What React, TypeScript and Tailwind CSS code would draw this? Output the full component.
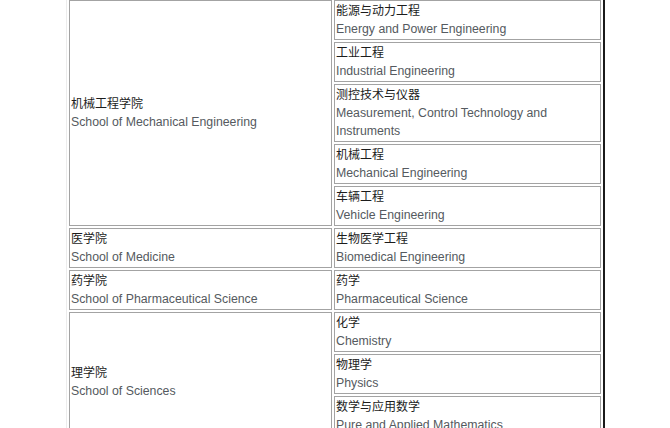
import React from 'react';

type Major = { zh: string; en: string; tall?: boolean };
type School = { zh: string; en: string; majors: Major[] };

const schools: School[] = [
  {
    zh: '机械工程学院',
    en: 'School of Mechanical Engineering',
    majors: [
      { zh: '能源与动力工程', en: 'Energy and Power Engineering' },
      { zh: '工业工程', en: 'Industrial Engineering' },
      { zh: '测控技术与仪器', en: 'Measurement, Control Technology and Instruments' },
      { zh: '机械工程', en: 'Mechanical Engineering' },
      { zh: '车辆工程', en: 'Vehicle Engineering' },
    ],
  },
  {
    zh: '医学院',
    en: 'School of Medicine',
    majors: [{ zh: '生物医学工程', en: 'Biomedical Engineering' }],
  },
  {
    zh: '药学院',
    en: 'School of Pharmaceutical Science',
    majors: [{ zh: '药学', en: 'Pharmaceutical Science' }],
  },
  {
    zh: '理学院',
    en: 'School of Sciences',
    majors: [
      { zh: '化学', en: 'Chemistry' },
      { zh: '物理学', en: 'Physics' },
      { zh: '数学与应用数学', en: 'Pure and Applied Mathematics', tall: true },
    ],
  },
];

const Label = ({ zh, en }: { zh: string; en: string }) => (
  <>
    <div className="text-[#1c1c1c] text-[12px]">{zh}</div>
    <div className="text-[#555a60]">{en}</div>
  </>
);

export default function App() {
  return (
    <div className="w-[670px] h-[428px] overflow-hidden bg-white font-['Liberation_Sans','Noto_Sans_CJK_SC',sans-serif] text-[12.3px] leading-[18px]">
      <table className="ml-[66px] -mt-[3px] w-[539px] border-separate border-spacing-[2px] border-t border-l border-t-[#ececec] border-l-[#ececec] border-r-[2px] border-r-[#1a1a1a] border-b border-b-[#1a1a1a]">
        <tbody>
          {schools.map((s) =>
            s.majors.map((m, i) => (
              <tr key={s.zh + m.zh}>
                {i === 0 && (
                  <td
                    rowSpan={s.majors.length}
                    className="w-[263px] border border-[#a3a3a3] p-[1px] align-middle text-left"
                  >
                    <Label zh={s.zh} en={s.en} />
                  </td>
                )}
                <td
                  className={
                    'border border-[#a3a3a3] p-[1px] align-top text-left ' +
                    (m.tall ? 'h-[56px]' : 'h-[40px]')
                  }
                >
                  <Label zh={m.zh} en={m.en} />
                </td>
              </tr>
            ))
          )}
        </tbody>
      </table>
    </div>
  );
}
